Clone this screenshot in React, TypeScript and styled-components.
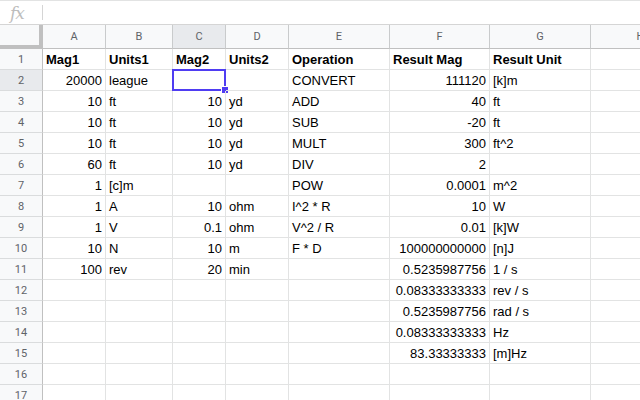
import styled, { createGlobalStyle } from "styled-components"

const GlobalStyle = createGlobalStyle`
  html, body {
    margin: 0;
    padding: 0;
    background: #fff;
    overflow: hidden;
  }
  body {
    font-family: "Liberation Sans", Arial, sans-serif;
  }
`

const COLS = ["A", "B", "C", "D", "E", "F", "G", "H"]
const SELECTED_COL = 2
const SELECTED_ROW = 2

type Cell = { v: string; num?: boolean }

const n = (v: string): Cell => ({ v, num: true })
const t = (v: string): Cell => ({ v })
const e: Cell = { v: "" }

const rows: Cell[][] = [
  [t("Mag1"), t("Units1"), t("Mag2"), t("Units2"), t("Operation"), t("Result Mag"), t("Result Unit"), e],
  [n("20000"), t("league"), e, e, t("CONVERT"), n("111120"), t("[k]m"), e],
  [n("10"), t("ft"), n("10"), t("yd"), t("ADD"), n("40"), t("ft"), e],
  [n("10"), t("ft"), n("10"), t("yd"), t("SUB"), n("-20"), t("ft"), e],
  [n("10"), t("ft"), n("10"), t("yd"), t("MULT"), n("300"), t("ft^2"), e],
  [n("60"), t("ft"), n("10"), t("yd"), t("DIV"), n("2"), e, e],
  [n("1"), t("[c]m"), e, e, t("POW"), n("0.0001"), t("m^2"), e],
  [n("1"), t("A"), n("10"), t("ohm"), t("I^2 * R"), n("10"), t("W"), e],
  [n("1"), t("V"), n("0.1"), t("ohm"), t("V^2 / R"), n("0.01"), t("[k]W"), e],
  [n("10"), t("N"), n("10"), t("m"), t("F * D"), n("100000000000"), t("[n]J"), e],
  [n("100"), t("rev"), n("20"), t("min"), e, n("0.5235987756"), t("1 / s"), e],
  [e, e, e, e, e, n("0.08333333333"), t("rev / s"), e],
  [e, e, e, e, e, n("0.5235987756"), t("rad / s"), e],
  [e, e, e, e, e, n("0.08333333333"), t("Hz"), e],
  [e, e, e, e, e, n("83.33333333"), t("[m]Hz"), e],
  [e, e, e, e, e, e, e, e],
  [e, e, e, e, e, e, e, e],
]

const Page = styled.div`
  width: 640px;
  height: 400px;
  overflow: hidden;
  display: flex;
  flex-direction: column;
`

const FormulaBar = styled.div`
  height: 25px;
  box-sizing: border-box;
  border-top: 1px solid #e2e3e3;
  border-bottom: 1px solid #d5d5d5;
  display: flex;
  align-items: center;
  flex-shrink: 0;
`

const Fx = styled.span`
  width: 42px;
  padding-left: 10px;
  box-sizing: border-box;
  font-family: "DejaVu Serif", "Liberation Serif", serif;
  font-style: italic;
  font-size: 17px;
  color: #bdbdbd;
  letter-spacing: -1px;
`

const Divider = styled.span`
  width: 1px;
  height: 15px;
  background: #d5d5d5;
`

const Grid = styled.div`
  display: grid;
  grid-template-columns: 43px 63px 67px 53px 63px 101px 100px 101px 100px;
  grid-auto-rows: 21px;
  grid-template-rows: 24px;
`

const Corner = styled.div`
  background: #f8f9fa;
  border-right: 4px solid #c0c0c0;
  border-bottom: 4px solid #c0c0c0;
  box-sizing: border-box;
`

const ColHead = styled.div<{ $active?: boolean }>`
  background: ${(p) => (p.$active ? "#e8eaed" : "#f8f9fa")};
  border-right: 1px solid #c9cbcc;
  border-bottom: 1px solid #c0c0c0;
  box-sizing: border-box;
  display: flex;
  align-items: center;
  justify-content: center;
  font-family: "Roboto", "Liberation Sans", sans-serif;
  font-size: 11px;
  color: #5f6368;
`

const RowHead = styled.div<{ $active?: boolean }>`
  background: ${(p) => (p.$active ? "#e8eaed" : "#f8f9fa")};
  border-right: 1px solid #c0c0c0;
  border-bottom: 1px solid #dadcdd;
  box-sizing: border-box;
  display: flex;
  align-items: center;
  justify-content: center;
  font-family: "Roboto", "Liberation Sans", sans-serif;
  font-size: 11px;
  color: #5f6368;
`

const DataCell = styled.div<{ $num?: boolean; $bold?: boolean }>`
  position: relative;
  border-right: 1px solid #e2e3e3;
  border-bottom: 1px solid #e2e3e3;
  box-sizing: border-box;
  display: flex;
  align-items: center;
  justify-content: ${(p) => (p.$num ? "flex-end" : "flex-start")};
  padding: 1px 3px 0 3px;
  font-size: 13px;
  font-weight: ${(p) => (p.$bold ? 700 : 400)};
  color: #000;
  white-space: nowrap;
  overflow: visible;
`

const Selection = styled.div`
  position: absolute;
  left: -1px;
  top: -1px;
  right: -1px;
  bottom: -1px;
  border: 2px solid #4f3df2;
  pointer-events: none;
  &::after {
    content: "";
    position: absolute;
    right: -5px;
    bottom: -5px;
    width: 6px;
    height: 6px;
    background: #4f3df2;
    border: 1px solid #fff;
  }
`

export default function App() {
  return (
    <>
      <GlobalStyle />
      <Page>
        <FormulaBar>
          <Fx>fx</Fx>
          <Divider />
        </FormulaBar>
        <Grid>
          <Corner />
          {COLS.map((c, i) => (
            <ColHead key={c} $active={i === SELECTED_COL}>
              {c}
            </ColHead>
          ))}
          {rows.map((r, ri) => (
            <Row key={ri} cells={r} index={ri + 1} />
          ))}
        </Grid>
      </Page>
    </>
  )
}

function Row({ cells, index }: { cells: Cell[]; index: number }) {
  return (
    <>
      <RowHead $active={index === SELECTED_ROW}>{index}</RowHead>
      {cells.map((c, ci) => {
        const selected = index === SELECTED_ROW && ci === SELECTED_COL
        return (
          <DataCell key={ci} $num={c.num} $bold={index === 1}>
            {c.v}
            {selected && <Selection />}
          </DataCell>
        )
      })}
    </>
  )
}
